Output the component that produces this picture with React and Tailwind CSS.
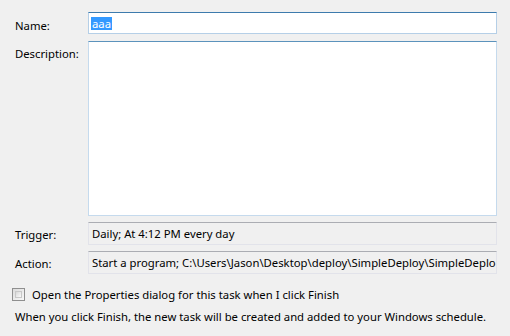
export default function App() {
  const font = { fontFamily: '"Segoe UI", "Noto Sans", "Liberation Sans", sans-serif' };
  return (
    <div
      className="w-[510px] h-[336px] bg-[#f0f0f0] text-black text-[11.3px] leading-[16px] overflow-hidden"
      style={font}
    >
      <div className="flex flex-col pt-[12px] pl-[15px] pr-[13px]">
        <div className="flex items-start">
          <div className="w-[73px] pt-[6px]">Name:</div>
          <div className="flex-1 h-[22px] border border-[#b5cfe7] border-t-[#3d7bad] bg-white px-[2px] flex items-center">
            <span className="bg-[#3399ff] text-white px-[1px] leading-[13px]">aaa</span>
          </div>
        </div>
        <div className="flex items-start mt-[7px]">
          <div className="w-[73px] pt-[5px]">Description:</div>
          <div className="flex-1 h-[175px] border border-[#c5daed] border-t-[#5c93bc] bg-white" />
        </div>
        <div className="flex items-start mt-[6px]">
          <div className="w-[73px] pt-[5px]">Trigger:</div>
          <div className="flex-1 h-[23px] border border-[#e2e3ea] border-t-[#abadb3] px-[3px] flex items-center whitespace-nowrap overflow-hidden">
            Daily; At 4:12 PM every day
          </div>
        </div>
        <div className="flex items-start mt-[6px]">
          <div className="w-[73px] pt-[5px]">Action:</div>
          <div className="flex-1 min-w-0 h-[23px] border border-[#e2e3ea] border-t-[#abadb3] px-[3px] flex items-center whitespace-nowrap overflow-hidden">
            <span>Start a program; C:\Users\Jason\Desktop\deploy\SimpleDeploy\SimpleDeplo</span>
          </div>
        </div>
        <label className="flex items-center mt-[13px] -ml-[3px]">
          <span className="w-[13px] h-[13px] border border-[#8f8f8f] bg-gradient-to-br from-[#dcdcdc] to-[#f8f8f8] p-[2px] -mt-[2px]">
            <span className="block w-full h-full border border-[#c8c8c8] bg-gradient-to-br from-[#d8d8d8] to-[#fafafa]" />
          </span>
          <span className="ml-[7px]">Open the Properties dialog for this task when I click Finish</span>
        </label>
        <div className="mt-[6px] whitespace-nowrap">
          When you click Finish, the new task will be created and added to your Windows schedule.
        </div>
      </div>
    </div>
  );
}
